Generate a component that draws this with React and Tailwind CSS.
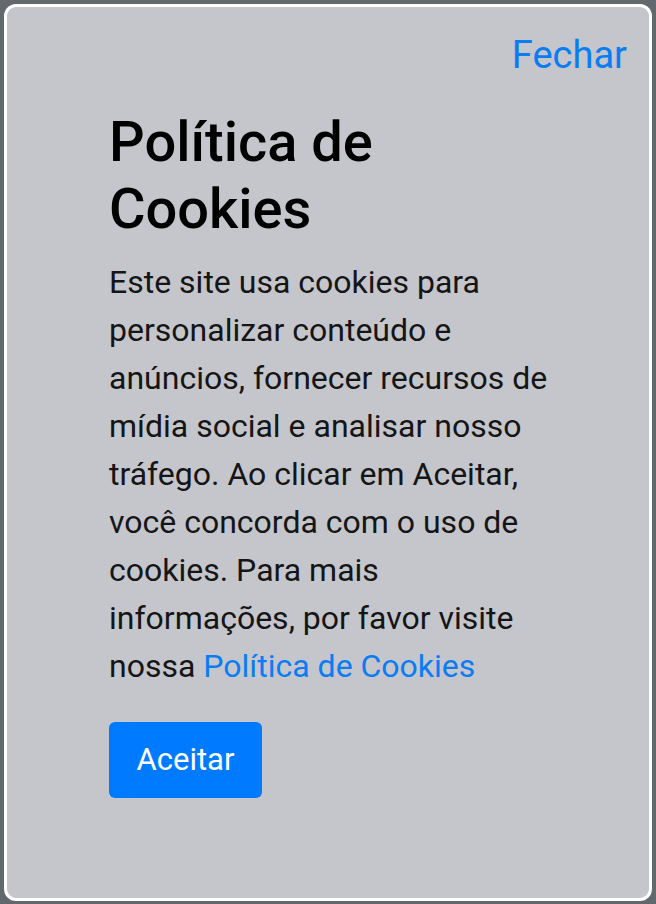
export default function App() {
  return (
    <div className="min-h-[904px] bg-[#62686b] px-1 pt-1 pb-[3px]" style={{ fontFamily: 'Roboto, "Noto Sans", sans-serif' }}>
      <div className="flex h-[897px] flex-col rounded-xl border-[3px] border-white bg-[#c4c6cb]">
        <div className="flex justify-end pt-[18px] pr-[22px]">
          <a href="#" className="text-[38px] leading-[60px] text-[#0a7cf4]">
            Fechar
          </a>
        </div>
        <div className="mt-[24px] pl-[102px]">
          <h2 className="w-[450px] text-[56px] font-medium leading-[67px] text-black">Política de Cookies</h2>
          <p className="mt-[15px] w-[450px] text-[32px] leading-[48px] text-[#151515]">
            Este site usa cookies para personalizar conteúdo e anúncios, fornecer recursos de mídia social e
            analisar nosso tráfego. Ao clicar em Aceitar, você concorda com o uso de cookies. Para mais
            informações, por favor visite nossa{' '}
            <a href="#" className="text-[#0a7cf4]">
              Política de Cookies
            </a>
          </p>
          <button className="mt-[32px] h-[76px] w-[153px] rounded-md bg-[#007bff] text-[31px] text-white">
            Aceitar
          </button>
        </div>
      </div>
    </div>
  );
}
